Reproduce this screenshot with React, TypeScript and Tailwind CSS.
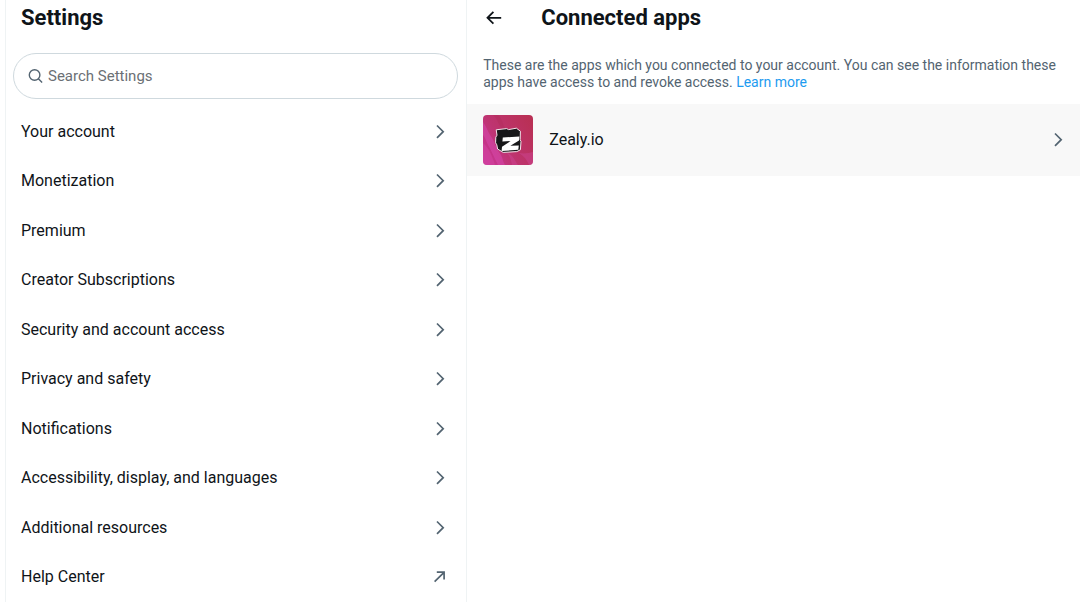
import React from "react";

const sections = [
  "Your account",
  "Monetization",
  "Premium",
  "Creator Subscriptions",
  "Security and account access",
  "Privacy and safety",
  "Notifications",
  "Accessibility, display, and languages",
  "Additional resources",
];

function Chevron() {
  return (
    <svg viewBox="0 0 20 20" className="size-5 shrink-0 text-[#536471]" fill="none" stroke="currentColor" strokeWidth="1.7" aria-hidden="true">
      <path d="M7 3.5 13.2 9.7 7 15.9" />
    </svg>
  );
}

function ArrowOut() {
  return (
    <svg viewBox="0 0 20 20" className="size-5 shrink-0 text-[#536471]" fill="none" stroke="currentColor" strokeWidth="1.7" aria-hidden="true">
      <path d="M4.6 14.6 13.8 5.6M6.8 5.2h7.3v7.3" />
    </svg>
  );
}

function BackArrow() {
  return (
    <svg viewBox="0 0 20 20" className="size-5" fill="none" stroke="currentColor" strokeWidth="1.8" aria-hidden="true">
      <path d="M18.2 9.8H4.6M10.4 3.9 4.5 9.8l5.9 5.9" />
    </svg>
  );
}

function SearchIcon() {
  return (
    <svg viewBox="0 0 16 16" className="size-4 shrink-0 text-[#536471]" fill="none" stroke="currentColor" strokeWidth="1.4" aria-hidden="true">
      <circle cx="6.6" cy="7" r="5.3" />
      <path d="m10.4 10.8 3.7 3.7" />
    </svg>
  );
}

function ZealyLogo() {
  return (
    <svg viewBox="0 0 50 50" className="size-[50px] shrink-0 rounded" aria-hidden="true">
      <defs>
        <linearGradient id="silk" x1="0" y1="0.8" x2="1" y2="0.2">
          <stop offset="0" stopColor="#c93596" />
          <stop offset="0.4" stopColor="#be3470" />
          <stop offset="1" stopColor="#b93055" />
        </linearGradient>
      </defs>
      <path fill="url(#silk)" d="M0 0h50v50H0z" />
      <path fill="#dc4db5" opacity=".45" d="M0 7c4 5 5 11 9 16 4 7 5 12 9 17 2 4 2 7 4 10h-7C11 42 8 35 5 30 3 26 2 22 0 20z" />
      <path fill="#d547a3" opacity=".5" d="M0 28c5 4 9 12 12 22H0z" />
      <path fill="#cf4796" opacity=".45" d="M24 38c5 1 7 6 11 12h-6c-1-5-2-9-5-12zM36 38c5 1 10 0 14-1v13h-4c-2-5-5-9-10-12z" />
      <path fill="#a6264f" opacity=".25" d="M15 0c5 4 4 9 8 14h-4c-4-5-4-10-9-14z" />
      <path fill="#171719" stroke="#f4e4eb" strokeWidth="1" strokeLinejoin="round" d="m13.2 14.8 10.4-1.2 2 1 7.8-1.4 4 3-.2 8.6.8 1.6-.6 8.4-3.6 1.8-13.6.8-5.6-3.4-.8-4.2-1.2-2 .2-5.6 1.2-2z" />
      <path fill="#fff" d="m19.8 22.4 16.6-.8-.4 4-8.6 5.2 8.4-.2-.5 4.2-16.7 1.2.4-4.2 8.6-5.8-8.2.6z" />
    </svg>
  );
}

export default function App() {
  return (
    <div className="flex min-h-screen bg-white pl-[5px] font-['Roboto','Liberation_Sans',sans-serif] text-[#0f1419]">
      <div className="flex w-[43%] shrink-0 flex-col border-x border-[#eff3f4]">
        <h1 className="px-[15px] pt-1 text-[22px] leading-7 font-bold">Settings</h1>
        <label className="mr-2 ml-[7px] mt-[21px] flex h-[46px] items-center gap-1 rounded-full border border-[#cfd9de] px-[14px]">
          <SearchIcon />
          <input
            type="search"
            aria-label="Search Settings"
            placeholder="Search Settings"
            className="min-w-0 flex-1 bg-transparent text-[15px] outline-none placeholder:text-[#6b7075]"
          />
        </label>
        <nav aria-label="Settings" className="mt-2 flex flex-1 flex-col">
          {sections.map((name) => (
            <a key={name} href="#" className="flex min-h-12 flex-1 items-center justify-between pr-4 pl-[15px] text-base">
              {name}
              <Chevron />
            </a>
          ))}
          <a href="#" className="flex min-h-12 flex-1 items-center justify-between pr-4 pl-[15px] text-base">
            Help Center
            <ArrowOut />
          </a>
        </nav>
      </div>
      <main className="min-w-0 flex-1">
        <header className="flex items-center gap-[38px] px-4 pt-1">
          <button type="button" aria-label="Back">
            <BackArrow />
          </button>
          <h2 className="text-[22px] leading-7 font-bold">Connected apps</h2>
        </header>
        <p className="mt-[25px] px-4 text-sm leading-[17px] text-[#536471]">
          These are the apps which you connected to your account. You can see the information these apps have access to and revoke access.{" "}
          <a href="#" className="text-[#1d9bf0]">Learn more</a>
        </p>
        <a href="#" className="mt-[13px] flex items-center gap-4 bg-[#f8f8f8] py-[11px] pr-3 pl-4">
          <ZealyLogo />
          <span className="flex-1 text-base">Zealy.io</span>
          <Chevron />
        </a>
      </main>
    </div>
  );
}
